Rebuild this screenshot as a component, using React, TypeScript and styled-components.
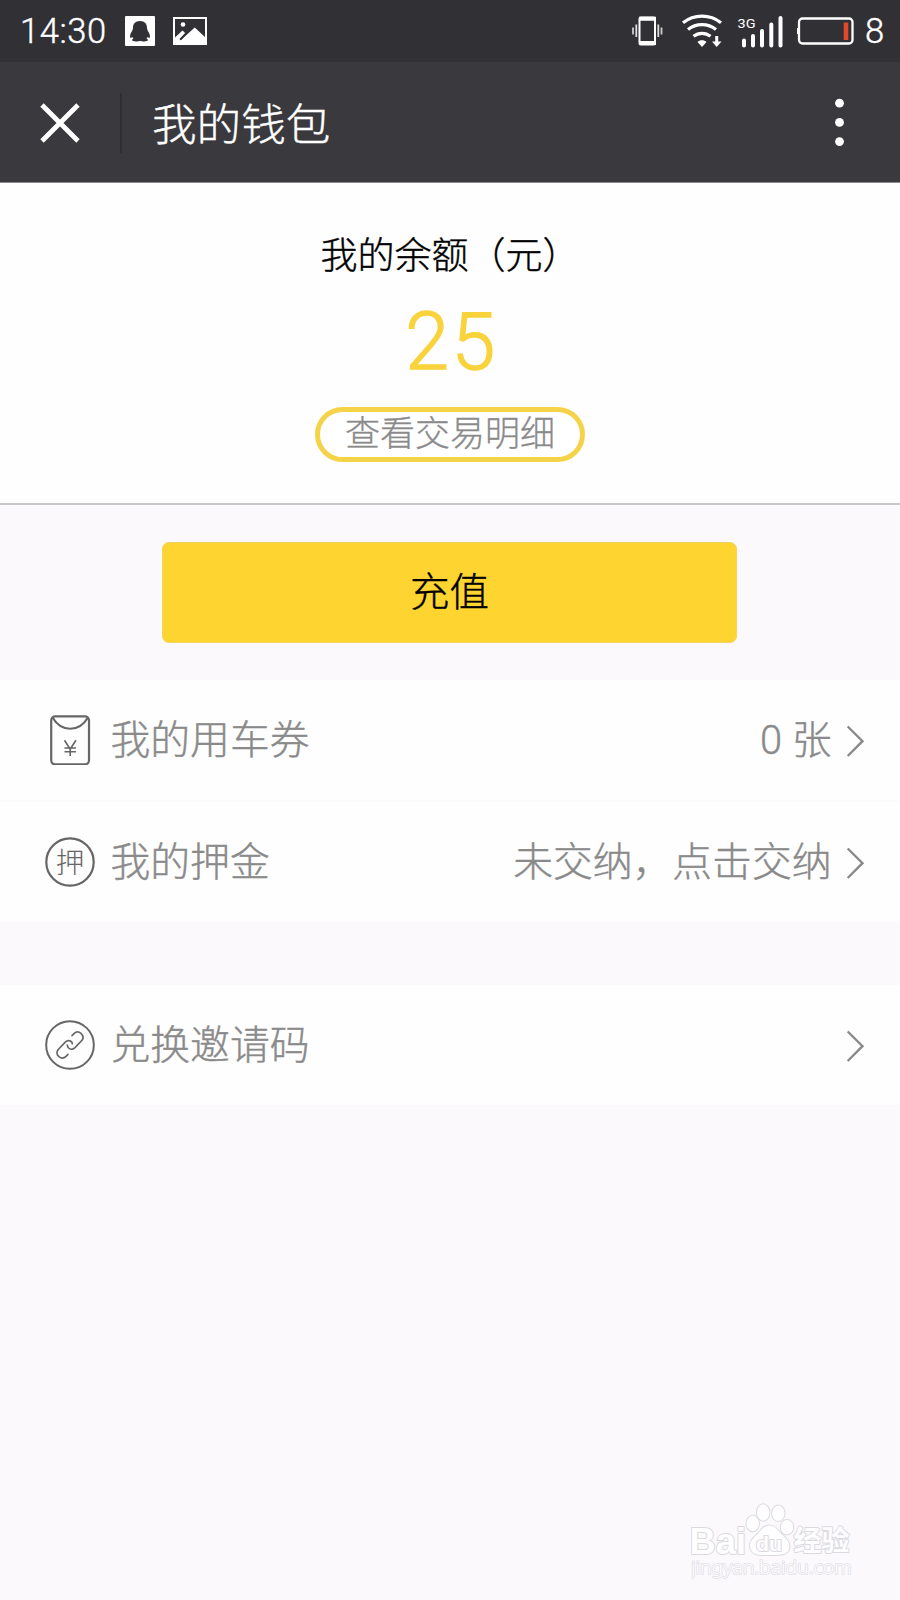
import React from 'react';
import styled, { createGlobalStyle } from 'styled-components';

const cjk = `Roboto, "Noto Sans CJK SC", sans-serif`;

const GlobalStyle = createGlobalStyle`
  * { box-sizing: border-box; }
  body { margin: 0; background: #fbf9fc; }
`;

const Page = styled.div`
  position: relative;
  width: 900px;
  height: 1600px;
  overflow: hidden;
  background: #fbf9fc;
  font-family: ${cjk};
  font-weight: 300;
  -webkit-text-stroke: 0.4px currentColor;
  display: flex;
  flex-direction: column;
`;

const StatusBar = styled.header`
  height: 62px;
  flex: none;
  background: #313035;
  color: #fff;
  display: flex;
  align-items: center;
  padding: 0 17px 0 20px;
`;

const Clock = styled.span`
  width: 105px;
  font-size: 34.5px;
  line-height: 62px;
  letter-spacing: 0.6px;
  white-space: nowrap;
`;

const StatusIcons = styled.div`
  display: flex;
  margin-left: auto;
`;

const Battery = styled.span`
  width: 18px;
  margin-left: 11px;
  font-size: 34.5px;
  line-height: 62px;
`;

const TitleBar = styled.nav`
  height: 121px;
  flex: none;
  background: #3a393e;
  border-bottom: 1px solid #8b8a8f;
  color: #fff;
  display: flex;
  align-items: center;
  padding: 2px 56px 0 40px;
`;

const Divider = styled.i`
  width: 2px;
  height: 60px;
  margin: 0 30px 0 40px;
  background: #2f2e33;
`;

const Title = styled.h1`
  margin: 0;
  padding-top: 5px;
  flex: 1;
  font-size: 44.6px;
  line-height: 114px;
  font-weight: 300;
`;

const Balance = styled.section`
  height: 322px;
  flex: none;
  background: #fefefe;
  border-bottom: 2px solid #c8c6ca;
  display: flex;
  flex-direction: column;
  align-items: center;
`;

const BalanceLabel = styled.div`
  margin-top: 49px;
  font-size: 37px;
  line-height: 50px;
  font-kerning: none;
  color: #000;
`;

const Amount = styled.div`
  margin-top: 15px;
  font-size: 79px;
  line-height: 90px;
  letter-spacing: 2.5px;
  padding-left: 3px;
  color: #f8d33c;
  -webkit-text-stroke-width: 1.3px;
`;

const DetailButton = styled.button`
  width: 270px;
  height: 55px;
  margin-top: 20px;
  padding: 0;
  border: 5px solid #f5d349;
  border-radius: 28px;
  background: #fff;
  font: 300 35px/44px ${cjk};
  -webkit-text-stroke: 0.3px currentColor;
  color: #8b8a8b;
  white-space: nowrap;
`;

const ActionArea = styled.div`
  height: 175px;
  flex: none;
  padding: 37px 1px 0 0;
  display: flex;
  justify-content: center;
  align-items: flex-start;
`;

const RechargeButton = styled.button`
  width: 575px;
  height: 101px;
  border: 1px solid #f2d460;
  border-radius: 7px;
  background: #fed530;
  padding: 0;
  font: 300 39.5px/92px ${cjk};
  -webkit-text-stroke: 0.4px currentColor;
  color: #000;
`;

const Group = styled.section`
  display: flex;
  flex-direction: column;
  flex: none;
  gap: 2px;
  margin-bottom: 63px;
`;

const Row = styled.div`
  height: 120px;
  background: #fefefe;
  display: flex;
  align-items: center;
  padding: 0 34px 0 45px;
  color: #8a8a8a;
`;

const RowText = styled.span`
  font-size: 39.8px;
  line-height: 60px;
  padding-top: 1px;
  white-space: nowrap;
`;

const RowLabel = styled(RowText)`
  flex: 1;
  margin-left: 15.5px;
`;

const Watermark = styled.div`
  position: absolute;
  left: 690.5px;
  top: 1501px;
  -webkit-text-stroke: initial;
`;

const QQIcon = () => (
  <svg width="30" height="30" viewBox="0 0 30 30">
    <rect width="30" height="30" rx="1" fill="#fff" />
    <path d="M15 5c-4.900 0-7 3-7 7 0 1.800-1.400 3.500-2.200 5.300-1 2.300-.9 4.300-.3 4.600.7.200 1.300-.6 1.900-1.200.2.900.6 1.500 1.100 2-1 .3-1.400.8-1.400 1.400 0 1 1.600 1.400 3.700 1.400 1.700 0 3.400-.2 4.200-.8.800.6 2.500.8 4.200.8 2.100 0 3.700-.4 3.700-1.400 0-.6-.4-1.100-1.400-1.400.5-.5.900-1.100 1.100-2 .6.600 1.200 1.400 1.900 1.200.6-.3.700-2.300-.3-4.600-.8-1.800-2.200-3.500-2.200-5.300 0-4-2.100-7-7-7z" fill="#313035" />
  </svg>
);

const PhotoIcon = styled(({ className }: { className?: string }) => (
  <svg className={className} width="34" height="28" viewBox="0 0 34 28">
    <path d="M1 1h32v26H1z" fill="none" stroke="#fff" strokeWidth="2" />
    <circle cx="10" cy="7.500" r="2.300" fill="#fff" />
    <path d="M2 20.500l7.500-7 2.600 2.500-5.600 6 1.200 1.200L21.700 10.500 32 20v7H2z" fill="#fff" />
    <path d="M7.300 22.700l5.800-6" stroke="#313035" strokeWidth="1.500" />
  </svg>
))`
  margin-left: 18px;
`;

const SystemIcons = () => (
  <svg width="224" height="36" viewBox="630 13 224 36" fill="none">
    <g stroke="#fff">
      <rect x="639.500" y="17.500" width="15.500" height="27" rx="1.500" strokeWidth="2" />
      <path d="M639 18.800h17M639 43h17" strokeWidth="4" />
      <path d="M636.300 24.500v12.500M658.300 24.500v12.500" strokeWidth="1.800" stroke="#ddd" />
      <path d="M633 27.500v7M661.500 27.500v7" strokeWidth="1.800" stroke="#ccc" />
      <path d="M683 22.800c11-9 27-9 38 0" strokeWidth="3.200" />
      <path d="M688 29.500c8-6.500 20-6.500 28 0" strokeWidth="3.200" />
      <path d="M693.500 36.300c5-4 12-4 17 0" strokeWidth="3.200" />
      <path d="M716.700 36v6" strokeWidth="3" />
      <path d="M744 40.500v5M753 36v9.500M762 31v14.500M771.300 24.500v21M780.500 18v27.500" strokeWidth="4" strokeLinecap="round" />
      <rect x="799" y="18.500" width="53.500" height="25" rx="3.500" strokeWidth="2.300" />
    </g>
    <path d="M697.500 42c2-2.500 7-2.500 9 0l-4.500 5zM712 41.500h9.500l-4.800 5.500z" fill="#fff" />
    <path d="M799 28h-2v6h2z" fill="#fff" />
    <rect x="843.700" y="22.500" width="4.600" height="17.500" fill="#e0492a" />
    <text x="737.500" y="27.500" fill="#fff" fontFamily="Roboto, sans-serif" fontWeight="400" fontSize="13.500" textLength="18" lengthAdjust="spacingAndGlyphs">3G</text>
  </svg>
);

const CloseIcon = () => (
  <svg width="40" height="40" viewBox="0 0 40 40">
    <path d="M2 2l36 36M38 2L2 38" stroke="#fff" strokeWidth="4.800" />
  </svg>
);

const MoreIcon = () => (
  <svg width="9" height="50" viewBox="0 0 9 50" fill="#fff">
    <circle cx="4.500" cy="5.200" r="4.400" />
    <circle cx="4.500" cy="24.400" r="4.400" />
    <circle cx="4.500" cy="43.600" r="4.400" />
  </svg>
);

const Chevron = styled(({ className }: { className?: string }) => (
  <svg className={className} width="20" height="34" viewBox="0 0 20 34">
    <path d="M1.700 2.500L16.500 17.200 1.700 32" fill="none" stroke="#8a8a8a" strokeWidth="2.400" />
  </svg>
))`
  margin-left: 14.5px;
  margin-top: 2px;
`;

const CouponIcon = () => (
  <svg width="50" height="50" viewBox="0 0 50 50" fill="none" stroke="#666" strokeWidth="2.200">
    <rect x="6.200" y="1.300" width="37.800" height="48" rx="4" />
    <path d="M7.500 2.500C16.500 17.500 34 17.500 43 2.500" />
    <path d="M19.500 25.200l5.700 9 5.700-9M25.200 34v7M19.500 33h11.500M19.500 36.700h11.500" strokeWidth="1.600" />
  </svg>
);

const DepositIcon = () => (
  <svg width="50" height="50" viewBox="0 0 50 50">
    <circle cx="25" cy="25" r="23.700" fill="none" stroke="#666" strokeWidth="2.200" />
    <text x="25" y="36" textAnchor="middle" fill="#666" fontSize="28.500" fontWeight="300" fontFamily={cjk}>押</text>
  </svg>
);

const InviteIcon = () => (
  <svg width="50" height="50" viewBox="45 150 150 150" fill="none" stroke="#666">
    <circle cx="120" cy="225" r="71.500" strokeWidth="6" />
    <g strokeWidth="5" strokeLinecap="round">
      <path d="M126 197L132 191Q142 181 153 190Q164 200 156 211L135 233Q125 242 116 234Q112 230 112 225" />
      <path d="M114 253L108 259Q98 269 87 260Q76 250 84 239L105 217Q115 208 124 215Q127 218 127 221" />
    </g>
  </svg>
);

const BaiduMark = () => (
  <svg width="164" height="84" viewBox="0 0 164 84" fill="#fefeff" stroke="#dcdadf" strokeWidth="2" paintOrder="stroke" strokeLinejoin="round">
    <g fontFamily={`"Liberation Sans", sans-serif`} fontWeight="700">
      <text x="-1.500" y="52.500" fontSize="36" textLength="56.500" lengthAdjust="spacingAndGlyphs">Bai</text>
      <ellipse cx="61.700" cy="22.500" rx="6.200" ry="7.800" />
      <ellipse cx="72.200" cy="11.500" rx="6.200" ry="8.200" />
      <ellipse cx="87.300" cy="12.200" rx="6.200" ry="7.800" />
      <ellipse cx="96" cy="26.200" rx="6.200" ry="7.300" />
      <path d="M78.500 24.500c-7 0-9 6-14 10.500-5 4.500-6.500 8-5 12.500 2 7 9 6.500 19 6.500s17.500.5 19.500-6c1.500-5-1-9-6-13.500-4.500-4-7-10-13.500-10z" />
      <text x="65" y="49.500" fontSize="19.500" textLength="26" lengthAdjust="spacingAndGlyphs">du</text>
    </g>
    <text x="102.500" y="50" fontSize="28" fontWeight="700" fontFamily={`"Noto Sans CJK SC", sans-serif`} textLength="56">经验</text>
    <text x="0" y="73" fontSize="18.500" fontFamily={`"Noto Sans", sans-serif`} stroke="#e2e0e5" strokeWidth="1.600" textLength="160.500" lengthAdjust="spacingAndGlyphs">jingyan.baidu.com</text>
  </svg>
);

export default function App() {
  return (
    <Page>
      <GlobalStyle />
      <StatusBar>
        <Clock>14:30</Clock>
        <QQIcon />
        <PhotoIcon />
        <StatusIcons><SystemIcons /></StatusIcons>
        <Battery>8</Battery>
      </StatusBar>
      <TitleBar>
        <CloseIcon />
        <Divider />
        <Title>我的钱包</Title>
        <MoreIcon />
      </TitleBar>
      <Balance>
        <BalanceLabel>我的余额（元）</BalanceLabel>
        <Amount>25</Amount>
        <DetailButton>查看交易明细</DetailButton>
      </Balance>
      <ActionArea>
        <RechargeButton>充值</RechargeButton>
      </ActionArea>
      <Group>
        <Row>
          <CouponIcon />
          <RowLabel>我的用车券</RowLabel>
          <RowText>0 张</RowText>
          <Chevron />
        </Row>
        <Row>
          <DepositIcon />
          <RowLabel>我的押金</RowLabel>
          <RowText>未交纳，点击交纳</RowText>
          <Chevron />
        </Row>
      </Group>
      <Group>
        <Row>
          <InviteIcon />
          <RowLabel>兑换邀请码</RowLabel>
          <Chevron />
        </Row>
      </Group>
      <Watermark><BaiduMark /></Watermark>
    </Page>
  );
}
